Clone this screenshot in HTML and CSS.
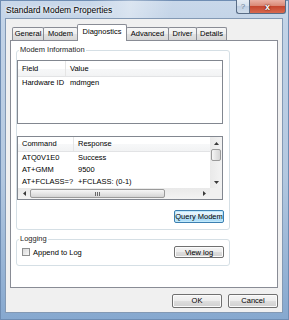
FILE: index.html
```html
<!DOCTYPE html>
<html lang="en">
<head>
    <meta charset="UTF-8">
    <meta name="viewport" content="width=device-width, initial-scale=1.0">
    <title>Standard Modem Properties</title>
    <link rel="stylesheet" href="styles.css">
</head>
<body>
    <div class="window">
        <div class="titlebar">
            <span class="title">Standard Modem Properties</span>
            <div class="caption">
                <span class="cap-btn help">?</span>
                <span class="cap-btn close">x</span>
            </div>
        </div>

        <div class="client">
            <div class="tabs">
                <span class="tab">General</span>
                <span class="tab">Modem</span>
                <span class="tab active">Diagnostics</span>
                <span class="tab">Advanced</span>
                <span class="tab">Driver</span>
                <span class="tab">Details</span>
            </div>

            <div class="panel">
                <fieldset class="group">
                    <legend>Modem Information</legend>
                    <div class="list info-list">
                        <div class="row head">
                            <span class="cell col-field">Field</span>
                            <span class="cell">Value</span>
                        </div>
                        <div class="row">
                            <span class="cell col-field">Hardware ID</span>
                            <span class="cell">mdmgen</span>
                        </div>
                    </div>

                    <div class="list cmd-list">
                        <div class="cmd-body">
                            <div class="row head">
                                <span class="cell col-cmd">Command</span>
                                <span class="cell">Response</span>
                            </div>
                            <div class="row">
                                <span class="cell col-cmd">ATQ0V1E0</span>
                                <span class="cell">Success</span>
                            </div>
                            <div class="row">
                                <span class="cell col-cmd">AT+GMM</span>
                                <span class="cell">9500</span>
                            </div>
                            <div class="row">
                                <span class="cell col-cmd">AT+FCLASS=?</span>
                                <span class="cell">+FCLASS: (0-1)</span>
                            </div>
                        </div>
                        <div class="vscroll">
                            <span class="arrow"><svg width="5" height="3" viewBox="0 0 5 3"><path d="M0 3L2.5 0L5 3Z"/></svg></span>
                            <span class="vthumb"></span>
                            <span class="fill"></span>
                            <span class="arrow"><svg width="5" height="3" viewBox="0 0 5 3"><path d="M0 0L2.5 3L5 0Z"/></svg></span>
                        </div>
                        <div class="hscroll">
                            <span class="arrow"><svg width="3" height="5" viewBox="0 0 3 5"><path d="M3 0L0 2.5L3 5Z"/></svg></span>
                            <span class="hthumb"><svg width="5" height="4" viewBox="0 0 5 4"><path d="M0.5 0V4M2.5 0V4M4.5 0V4"/></svg></span>
                            <span class="fill"></span>
                            <span class="arrow"><svg width="3" height="5" viewBox="0 0 3 5"><path d="M0 0L3 2.5L0 5Z"/></svg></span>
                        </div>
                        <div class="corner"></div>
                    </div>

                    <div class="group-actions">
                        <button class="btn hot">Query Modem</button>
                    </div>
                </fieldset>

                <fieldset class="group logging">
                    <legend>Logging</legend>
                    <div class="log-row">
                        <label class="check"><span class="box"></span>Append to Log</label>
                        <button class="btn small">View log</button>
                    </div>
                </fieldset>
            </div>

            <div class="dialog-buttons">
                <button class="btn wide">OK</button>
                <button class="btn wide">Cancel</button>
            </div>
        </div>
    </div>
</body>
</html>
```

FILE: styles.css
```css
body {
    margin: 0;
    font-family: "Liberation Sans", Arial, sans-serif;
    font-size: 7.5px;
    color: #000;
}
.window {
    width: 289px;
    height: 320px;
    box-sizing: border-box;
    padding: 0 6px 7px 5px;
    display: flex;
    flex-direction: column;
    background: linear-gradient(to bottom, #c9d8ea 0, #c2d3e7 8%, #b3c8e0 55%, #86a8cf 100%);
    box-shadow: inset 0 0 0 1px #6f8db3;
}
.titlebar {
    height: 18px;
    display: flex;
    justify-content: space-between;
    align-items: flex-start;
    background: linear-gradient(100deg, rgba(255,255,255,0) 30%, rgba(255,255,255,.35) 45%, rgba(255,255,255,0) 60%);
}
.title {
    margin: 5px 0 0 1px;
    font-size: 8.5px;
    line-height: 10px;
    text-shadow: 0 0 3px #fff, 0 0 5px #fff;
}
.caption {
    display: flex;
    margin-right: -3px;
}
.cap-btn {
    height: 14px;
    box-sizing: border-box;
    display: flex;
    align-items: center;
    justify-content: center;
    border: 1px solid #586c86;
    border-top: none;
}
.help {
    width: 13px;
    border-right: none;
    border-radius: 0 0 0 3px;
    background: linear-gradient(#e6edf5, #d3dfec 50%, #bfcfe3 50%, #d0ddeb);
    color: #6d7f95;
    font-size: 8px;
}
.close {
    width: 37px;
    border-radius: 0 0 3px 0;
    background: linear-gradient(#eab1a5, #da8875 45%, #c5472f 50%, #d8694f);
    color: #fff;
    font-weight: bold;
    font-size: 9px;
    text-shadow: 0 0 1px #5a1a10, 0 0 2px #5a1a10;
}
.client {
    flex: 1;
    display: flex;
    flex-direction: column;
    padding: 0 4px;
    background: #f0f0f0;
    border: 1px solid #8399b4;
}
.tabs {
    display: flex;
    align-items: flex-end;
    height: 16px;
    margin-top: 5px;
    padding-left: 2px;
}
.tab {
    height: 13px;
    line-height: 12px;
    box-sizing: border-box;
    margin-right: -1px;
    text-align: center;
    border: 1px solid #898c95;
    border-bottom: none;
    border-radius: 2px 2px 0 0;
    background: linear-gradient(#f7f7f7, #ededed 50%, #e2e2e2 50%, #d7d7d7);
}
.tab:nth-child(1) { width: 32px; }
.tab:nth-child(2) { width: 35px; }
.tab:nth-child(3) { width: 50px; }
.tab:nth-child(4) { width: 43px; }
.tab:nth-child(5) { width: 29px; }
.tab:nth-child(6) { width: 31px; }
.tab.active {
    position: relative;
    z-index: 1;
    height: 17px;
    line-height: 13px;
    margin-bottom: -1px;
    background: #fff;
}
.panel {
    height: 248px;
    box-sizing: border-box;
    padding: 4px 0 0 5px;
    background: #fff;
    border: 1px solid #898c95;
}
.group {
    width: 214px;
    box-sizing: border-box;
    min-width: 0;
    margin: 0;
    padding: 0 0 6px 0;
    border: 1px solid #d5dfe5;
    border-radius: 3px;
}
.group legend {
    margin-left: 2px;
    padding: 0 1px;
    line-height: 10px;
    color: #1e1e1e;
}
.list {
    width: 206px;
    height: 64px;
    box-sizing: border-box;
    background: #fff;
    border: 1px solid #828790;
}
.info-list {
    margin-top: 5px;
}
.row {
    display: flex;
    height: 12px;
    line-height: 12px;
    white-space: nowrap;
}
.row.head {
    height: 16px;
    line-height: 15px;
    box-sizing: border-box;
    border-bottom: 1px solid #e2e3e5;
    background: linear-gradient(#fff, #fff 50%, #f7f8f9 50%, #f2f3f4);
}
.cmd-list .row.head {
    height: 15px;
    line-height: 14px;
}
.cell {
    padding-left: 4px;
    box-sizing: border-box;
}
.head .cell:first-child {
    border-right: 1px solid #e5e5e5;
}
.col-field { width: 48px; }
.col-cmd { width: 56px; }
.cmd-list {
    margin-top: 12px;
    display: grid;
    grid-template-columns: 192px 12px;
    grid-template-rows: 51px 11px;
}
.cmd-body {
    overflow: hidden;
}
.vscroll,
.hscroll {
    display: flex;
    background: linear-gradient(to right, #e9e9e9, #f3f3f3);
}
.vscroll {
    flex-direction: column;
}
.hscroll {
    background: linear-gradient(#e9e9e9, #f3f3f3);
}
.arrow {
    width: 12px;
    height: 12px;
    flex: none;
    display: flex;
    align-items: center;
    justify-content: center;
    fill: #3a3a3a;
}
.hscroll .arrow {
    height: 11px;
}
.fill {
    flex: 1;
}
.vthumb {
    height: 12px;
    margin: 0 1px;
    box-sizing: border-box;
    border: 1px solid #9a9a9a;
    border-radius: 2px;
    background: linear-gradient(to right, #f6f6f6, #e4e4e4 50%, #d6d6d6);
}
.hthumb {
    width: 135px;
    margin: 1px 0;
    box-sizing: border-box;
    display: flex;
    align-items: center;
    justify-content: center;
    border: 1px solid #9a9a9a;
    border-radius: 2px;
    background: linear-gradient(#f6f6f6, #e6e6e6 50%, #d4d4d4);
    stroke: #6a6a6a;
    stroke-width: 1;
}
.corner {
    background: #f0f0f0;
}
.group-actions {
    display: flex;
    justify-content: flex-end;
    margin-top: 10px;
    padding-right: 5px;
}
.btn {
    width: 50px;
    height: 13px;
    padding: 0;
    box-sizing: border-box;
    font-family: "Liberation Sans", Arial, sans-serif;
    font-size: 7.5px;
    line-height: 11px;
    color: #000;
    border: 1px solid #707070;
    border-radius: 2px;
    background: linear-gradient(#f4f4f4, #ececec 50%, #dedede 50%, #d0d0d0);
    box-shadow: inset 0 0 0 1px #fbfbfb;
}
.btn.hot {
    border-color: #3c7fb1;
    background: linear-gradient(#eaf6fd, #d9f0fc 50%, #bee6fd 50%, #a7d9f5);
    box-shadow: inset 0 0 0 1px #c0e9fb;
}
.btn.small {
    height: 12px;
}
.btn.wide {
    height: 14px;
    line-height: 12px;
}
.logging {
    margin-top: 4px;
    padding-bottom: 7px;
}
.log-row {
    display: flex;
    justify-content: space-between;
    align-items: center;
    margin-top: 2px;
    padding: 0 5px;
}
.check {
    display: flex;
    align-items: center;
}
.box {
    width: 8px;
    height: 8px;
    margin-right: 3px;
    box-sizing: border-box;
    border: 1px solid #8e8f8f;
    background: linear-gradient(135deg, #d8d8d8, #f8f8f8);
}
.dialog-buttons {
    display: flex;
    justify-content: flex-end;
    gap: 6px;
    margin-top: 6px;
}
```
